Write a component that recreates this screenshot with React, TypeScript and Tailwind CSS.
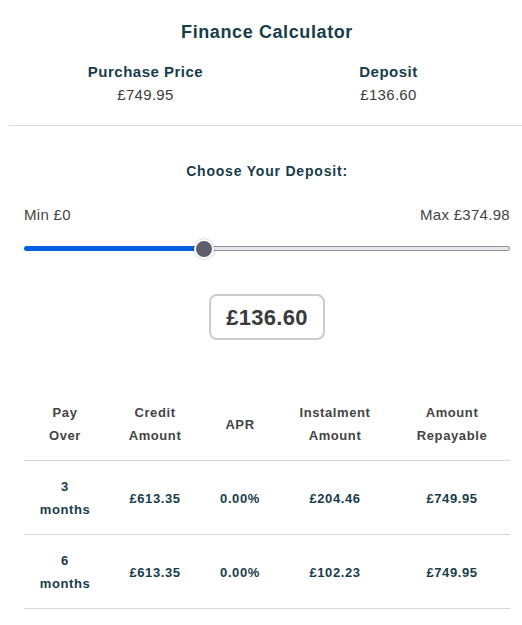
const font = { fontFamily: '"Liberation Sans", Arial, sans-serif' };

const rows = [
  { months: 3, credit: "£613.35", apr: "0.00%", instalment: "£204.46", repayable: "£749.95" },
  { months: 6, credit: "£613.35", apr: "0.00%", instalment: "£102.23", repayable: "£749.95" },
];

export default function App() {
  return (
    <div className="w-[522px] bg-white text-[#3d3d3d]" style={font}>
      <div className="pl-6 pr-3 pt-[21px]">
        <h1 className="text-center text-[18px] font-bold leading-[22px] tracking-[0.6px] text-[#173d4b]">Finance Calculator</h1>
        <div className="mt-[18px] grid grid-cols-2 text-center">
          <div>
            <p className="text-[15px] font-bold leading-[22px] tracking-[0.5px] text-[#173d4b]">Purchase Price</p>
            <p className="mt-[1px] text-[15px] leading-[22px] tracking-[0.3px]">£749.95</p>
          </div>
          <div>
            <p className="text-[15px] font-bold leading-[22px] tracking-[0.5px] text-[#173d4b]">Deposit</p>
            <p className="mt-[1px] text-[15px] leading-[22px] tracking-[0.3px]">£136.60</p>
          </div>
        </div>
      </div>
      <div className="ml-[9px] mt-[19px] h-px bg-[#dddddd]" />

      <div className="pl-6 pr-3">
        <p className="mt-[36px] text-center text-[14px] font-bold leading-[18px] tracking-[0.8px] text-[#173d4b]">Choose Your Deposit:</p>
        <div className="mt-[26px] flex justify-between text-[15px] leading-[18px] tracking-[0.3px] text-[#444444]">
          <span>Min £0</span>
          <span>Max £374.98</span>
        </div>
        <div className="relative mt-[15px] h-[20px]">
          <div className="absolute left-0 right-0 top-[7px] flex h-[5px]">
            <div className="h-full w-[182px] rounded-l-full bg-[#0060df]" />
            <div className="h-full flex-1 rounded-r-full border border-l-0 border-[#8f8f9d] bg-[#e9e9ed]" />
          </div>
          <div className="absolute left-[170px] top-0 h-[20px] w-[20px] rounded-full border-2 border-white bg-[#5f5e6c] shadow-[0_0_2px_rgba(0,0,0,0.35)]" />
        </div>
        <div className="mt-[35px] flex justify-center">
          <div className="flex h-[46px] w-[116px] items-center justify-center rounded-[8px] border-2 border-[#cccccc] text-[22px] font-bold tracking-[0.3px] text-[#3a3a3a]">
            £136.60
          </div>
        </div>

        <table className="mt-[61px] w-full border-collapse text-center text-[13px] font-bold leading-[23px] tracking-[0.6px]">
          <thead>
            <tr className="border-b border-[#d6d6d6] text-[#444444]">
              <th className="w-[82px] pb-[13px] font-bold">Pay<br />Over</th>
              <th className="w-[98px] pb-[13px] font-bold">Credit<br />Amount</th>
              <th className="w-[72px] pb-[13px] font-bold">APR</th>
              <th className="w-[118px] pb-[13px] font-bold">Instalment<br />Amount</th>
              <th className="pb-[13px] font-bold">Amount<br />Repayable</th>
            </tr>
          </thead>
          <tbody className="text-[#173d4b]">
            {rows.map((r) => (
              <tr key={r.months} className="border-b border-[#d6d6d6]">
                <td className="pb-[13px] pt-[14px]">{r.months}<br />months</td>
                <td className="pb-[13px] pt-[14px]">{r.credit}</td>
                <td className="pb-[13px] pt-[14px]">{r.apr}</td>
                <td className="pb-[13px] pt-[14px]">{r.instalment}</td>
                <td className="pb-[13px] pt-[14px]">{r.repayable}</td>
              </tr>
            ))}
          </tbody>
        </table>
      </div>
    </div>
  );
}
